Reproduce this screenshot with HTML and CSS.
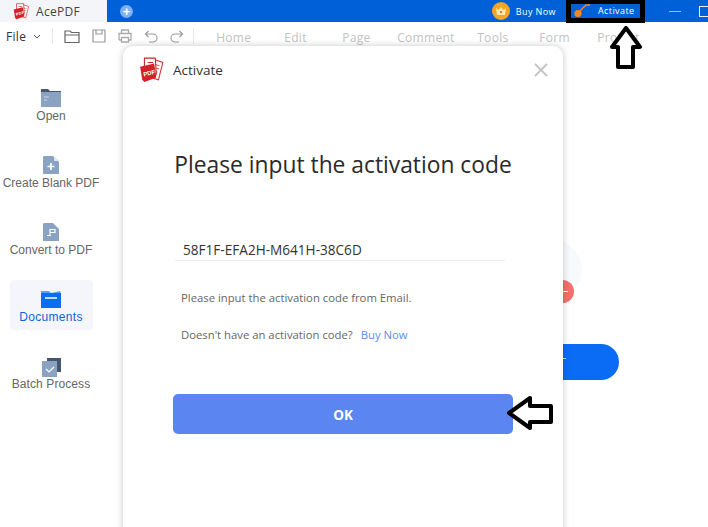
FILE: index.html
```html
<!DOCTYPE html>
<html lang="en">
<head>
    <meta charset="UTF-8">
    <title>AcePDF - Activate</title>
    <link rel="stylesheet" href="styles.css">
</head>
<body>
    <div class="titlebar">
        <div class="tab">
            <svg class="logo-small" viewBox="0 0 24 24"><use href="#pdf-logo"/></svg>
            <span>AcePDF</span>
        </div>
        <div class="new-tab">+</div>
        <div class="title-right">
            <div class="crown">
                <svg viewBox="0 0 18 18" width="18" height="18">
                    <circle cx="9" cy="9" r="9" fill="#f5a623"/>
                    <path d="M4 6l2.5 2L9 5l2.5 3L14 6l-1 7H5z" fill="#ffe9a8"/>
                    <circle cx="9" cy="10" r="1" fill="#d8452e"/>
                </svg>
            </div>
            <span class="buy-now">Buy Now</span>
            <div class="activate-box">
                <svg viewBox="0 0 20 14" width="20" height="14">
                    <circle cx="5" cy="9.5" r="3.6" fill="#f08a24"/>
                    <path d="M7 7l6-6h4" stroke="#f08a24" stroke-width="1.4" fill="none"/>
                </svg>
                <span>Activate</span>
            </div>
            <div class="win-min"></div>
            <div class="win-max"></div>
        </div>
    </div>

    <div class="toolbar">
        <div class="file-menu">File
            <svg viewBox="0 0 8 5" width="8" height="5"><path d="M1 1l3 3 3-3" stroke="#555" fill="none"/></svg>
        </div>
        <div class="divider"></div>
        <div class="tool-icons">
            <svg viewBox="0 0 16 15" width="16" height="15"><path d="M1 13.5V2h5l1.5 1.5H15v10zM1 6h14" stroke="#666" stroke-width="1.2" fill="none"/></svg>
            <svg viewBox="0 0 14 14" width="14" height="14"><path d="M1 1h12v12H1zM4 1v4h6V1" stroke="#999" stroke-width="1.2" fill="none"/></svg>
            <svg viewBox="0 0 14 14" width="14" height="14"><path d="M3.500 4V1h7v3M1 11V4.500h12V11h-2.500M3.500 11H1M3.500 8.500h7V13h-7z" stroke="#aaa" stroke-width="1.300" fill="none"/></svg>
            <svg viewBox="0 0 14 13" width="14" height="13"><path d="M4.500 1L1.500 4l3 3M1.500 4H9a3.500 3.500 0 0 1 0 8H5" stroke="#999" stroke-width="1.100" fill="none"/></svg>
            <svg viewBox="0 0 14 13" width="14" height="13"><path d="M9.500 1l3 3-3 3M12.500 4H5a3.500 3.500 0 0 0 0 8h4" stroke="#999" stroke-width="1.100" fill="none"/></svg>
        </div>
        <div class="divider second"></div>
        <nav class="menu">
            <span class="m-home">Home</span>
            <span class="m-edit">Edit</span>
            <span class="m-page">Page</span>
            <span class="m-comment">Comment</span>
            <span class="m-tools">Tools</span>
            <span class="m-form">Form</span>
            <span>Protect</span>
        </nav>
    </div>

    <aside class="sidebar">
        <div class="side-item item-open">
            <svg viewBox="0 0 20 18" width="20" height="18">
                <path d="M0 0h7l2 2h11v2H0z" fill="#46566e"/>
                <path d="M0 3h20v15H0z" fill="#8aa3c2"/>
                <path d="M3 8h5M3 11h3" stroke="#c8d5e5" stroke-width="1"/>
            </svg>
            <span>Open</span>
        </div>
        <div class="side-item item-blank">
            <svg viewBox="0 0 16 18" width="16" height="18">
                <path d="M1 0h9l6 6v12H0V1z" fill="#8aa3c2"/>
                <path d="M11 0l5 5h-5z" fill="#dbe4ef"/>
                <path d="M8 7v7M4.500 10.500h7" stroke="#fff" stroke-width="1.700"/>
            </svg>
            <span>Create Blank PDF</span>
        </div>
        <div class="side-item item-convert">
            <svg viewBox="0 0 16 18" width="16" height="18">
                <path d="M1 0h9l6 6v12H0V1z" fill="#8aa3c2"/>
                <path d="M7 9.500h5v-3H7v6M4 12.500h4" stroke="#fff" stroke-width="1.200" fill="none"/>
            </svg>
            <span>Convert to PDF</span>
        </div>
        <div class="side-item item-docs">
            <svg viewBox="0 0 20 17" width="20" height="17">
                <path d="M0 0h8l2 2 9-2 1 3H0z" fill="#5aa0f5"/>
                <path d="M0 2h20v15H0z" fill="#0a6cf0"/>
                <path d="M4 7h12" stroke="#fff" stroke-width="1.500"/>
            </svg>
            <span>Documents</span>
        </div>
        <div class="side-item item-batch">
            <svg viewBox="0 0 19 19" width="19" height="19">
                <path d="M5 0h14v14h-5V5H5z" fill="#46566e"/>
                <path d="M0 3h15v16H0z" fill="#8aa3c2"/>
                <path d="M4 11l3 3 5-5" stroke="#fff" stroke-width="1.200" fill="none"/>
            </svg>
            <span>Batch Process</span>
        </div>
    </aside>

    <!-- empty state behind the dialog -->
    <div class="empty-circle"></div>
    <div class="empty-badge"></div>
    <div class="empty-button"></div>

    <div class="dialog">
        <div class="dialog-head">
            <svg class="logo-big" viewBox="0 0 24 24"><use href="#pdf-logo"/></svg>
            <span>Activate</span>
            <svg class="close" viewBox="0 0 14 14" width="14" height="14"><path d="M1 1l12 12M13 1L1 13" stroke="#c4c4c4" stroke-width="1.800"/></svg>
        </div>
        <div class="dialog-body">
            <h1>Please input the activation code</h1>
            <div class="code-input">58F1F-EFA2H-M641H-38C6D</div>
            <p class="hint">Please input the activation code from Email.</p>
            <p class="hint hint-buy">Doesn't have an activation code? <a href="#">Buy Now</a></p>
            <button class="ok-btn">OK</button>
        </div>
    </div>

    <svg class="arrow arrow-up" viewBox="0 0 34 44" width="34" height="44">
        <path d="M17 2L31 21H24V41H9V21H3z" fill="#fff" stroke="#000" stroke-width="4" stroke-linejoin="round"/>
    </svg>
    <svg class="arrow arrow-left" viewBox="0 0 48 36" width="48" height="36">
        <path d="M3 18L24 3V11H45V27H24V33z" fill="#fff" stroke="#000" stroke-width="4" stroke-linejoin="round"/>
    </svg>

    <svg class="defs" width="0" height="0">
        <defs>
            <g id="pdf-logo">
                <path d="M13 2l9 3-4 16-7-2z" fill="#fff" stroke="#d9343a" stroke-width="1"/>
                <path d="M15 7l4 1M14.500 10l4 1M14 13l3 1" stroke="#d9343a" stroke-width=".8"/>
                <path d="M5 1h10l1 15-3 1H5z" fill="#fff" stroke="#c9242b" stroke-width="1"/>
                <path d="M8 5h5M8 8h5" stroke="#c9242b"/>
                <path d="M1 9l13-3 2 13-11 4-2-2z" fill="#d3222a"/>
                <text x="4" y="17" font-size="5.500" font-weight="700" fill="#fff" font-family="Liberation Sans, sans-serif" transform="rotate(-14 8 15)">PDF</text>
            </g>
        </defs>
    </svg>
</body>
</html>
```
FILE: styles.css
```css
html, body {
    margin: 0;
    height: 100%;
}
body {
    position: relative;
    width: 708px;
    height: 527px;
    overflow: hidden;
    background: #fff;
    font-family: "Open Sans", "Noto Sans", sans-serif;
    color: #333;
}

/* title bar */
.titlebar {
    display: flex;
    align-items: center;
    height: 22px;
    background: #0060d8;
}
.tab {
    display: flex;
    align-items: center;
    gap: 6px;
    width: 107px;
    height: 22px;
    padding-left: 13px;
    box-sizing: border-box;
    background: #f3f5f8;
    font-size: 12px;
    letter-spacing: 0.3px;
    color: #444;
}
.logo-small { width: 17px; height: 17px; }
.new-tab {
    width: 13px;
    height: 13px;
    margin-left: 13px;
    border-radius: 50%;
    background: #7fb0f5;
    color: #fff;
    font: 700 13px/13px "Liberation Sans", sans-serif;
    text-align: center;
}
.title-right {
    display: flex;
    align-items: center;
    margin-left: auto;
    height: 22px;
    color: #fff;
    font-size: 9px;
    letter-spacing: 0.4px;
}
.crown { display: flex; margin-right: 6px; }
.buy-now { margin-right: 10px; }
.activate-box {
    display: flex;
    align-items: center;
    gap: 5px;
    box-sizing: border-box;
    width: 79px;
    height: 23px;
    padding-left: 2px;
    border: 5px solid #000;
    border-top-width: 4px;
    background: #0060d8;
    margin-right: 24px;
}
.win-min {
    width: 12px;
    height: 1px;
    background: #9cc2f2;
    margin-right: 18px;
}
.win-max {
    width: 9px;
    height: 9px;
    border: 1px solid #e6effb;
    margin-right: -2px;
}

/* toolbar */
.toolbar {
    display: flex;
    align-items: center;
    height: 28px;
    font-size: 12px;
}
.file-menu {
    display: flex;
    align-items: center;
    gap: 7px;
    margin-left: 6px;
    color: #333;
    letter-spacing: 0.3px;
}
.divider {
    width: 1px;
    height: 16px;
    margin-left: 11px;
    background: #e8e8e8;
}
.divider.second { margin-left: 9px; }
.tool-icons {
    display: flex;
    align-items: center;
    gap: 12px;
    margin-left: 11px;
}
.menu {
    display: flex;
    margin-left: 22px;
    padding-top: 3px;
    color: #c2c2c2;
    letter-spacing: 0.3px;
}
.m-home { width: 68px; }
.m-edit { width: 58px; }
.m-page { width: 55px; }
.m-comment { width: 80px; }
.m-tools { width: 62px; }
.m-form { width: 58px; }

/* left column */
.sidebar {
    display: flex;
    flex-direction: column;
    align-items: center;
    width: 102px;
    padding-top: 39px;
}
.side-item {
    display: flex;
    flex-direction: column;
    align-items: center;
    gap: 2px;
    width: 83px;
    height: 67px;
    box-sizing: border-box;
    font: 12px/15px "Liberation Sans", sans-serif;
    color: #666;
    white-space: nowrap;
}
.side-item svg { flex: none; }
.item-convert { height: 57px; }
.item-docs {
    height: 50px;
    margin-bottom: 28px;
    padding-top: 11px;
    background: #f4f6fb;
    border-radius: 4px;
    color: #0a66d8;
    gap: 2px;
    letter-spacing: 0.3px;
}
.item-batch { gap: 0; letter-spacing: 0.1px; }

/* what the dialog covers */
.empty-circle {
    position: absolute;
    left: 490px;
    top: 234px;
    width: 92px;
    height: 72px;
    border-radius: 50%;
    background: #f7fafc;
}
.empty-badge {
    position: absolute;
    left: 551px;
    top: 280px;
    width: 23px;
    height: 23px;
    border-radius: 50%;
    background: #f4706a;
}
.empty-badge::after {
    content: "";
    position: absolute;
    left: 6px;
    top: 11px;
    width: 11px;
    height: 1px;
    background: #fff;
}
.empty-button {
    position: absolute;
    left: 490px;
    top: 344px;
    width: 129px;
    height: 36px;
    border-radius: 18px;
    background: #0a6cf5;
}
.empty-button::after {
    content: "";
    position: absolute;
    left: 73px;
    top: 14px;
    width: 3px;
    height: 1px;
    background: #bcd6fb;
}

/* dialog */
.dialog {
    position: absolute;
    left: 123px;
    top: 46px;
    width: 440px;
    height: 500px;
    background: #fff;
    border-radius: 10px;
    box-shadow: 0 0 7px rgba(0, 0, 0, 0.22);
}
.dialog-head {
    display: flex;
    align-items: center;
    gap: 8px;
    height: 44px;
    padding: 2px 15px 0 16px;
    font-size: 13.500px;
    color: #333;
}
.logo-big { width: 26px; height: 26px; }
.close { margin-left: auto; }
.dialog-body {
    display: flex;
    flex-direction: column;
    padding: 58px 50px 0;
}
.dialog-body h1 {
    margin: 0;
    font-size: 22.800px;
    font-weight: 400;
    line-height: 30px;
    color: #2a2a2a;
    white-space: nowrap;
    text-align: center;
}
.code-input {
    margin: 59px 8px 0 2px;
    padding: 0 0 0 8px;
    border-bottom: 1px solid #ececec;
    font-size: 13.600px;
    line-height: 21px;
    color: #333;
}
.hint {
    margin: 29px 0 0 8px;
    font-size: 11.300px;
    line-height: 16px;
    color: #666;
}
.hint-buy { margin-top: 21px; }
.hint-buy a {
    margin-left: 5px;
    color: #5b8def;
    text-decoration: none;
}
.ok-btn {
    width: 340px;
    height: 40px;
    margin-top: 51px;
    padding-top: 3px;
    border: none;
    border-radius: 5px;
    background: #5b86f2;
    color: #fff;
    font: 700 13.500px "Open Sans", sans-serif;
}

/* annotations drawn on the screenshot */
.arrow { position: absolute; }
.arrow-up { left: 609px; top: 26px; }
.arrow-left { left: 506px; top: 395px; }
.defs { position: absolute; }
```
